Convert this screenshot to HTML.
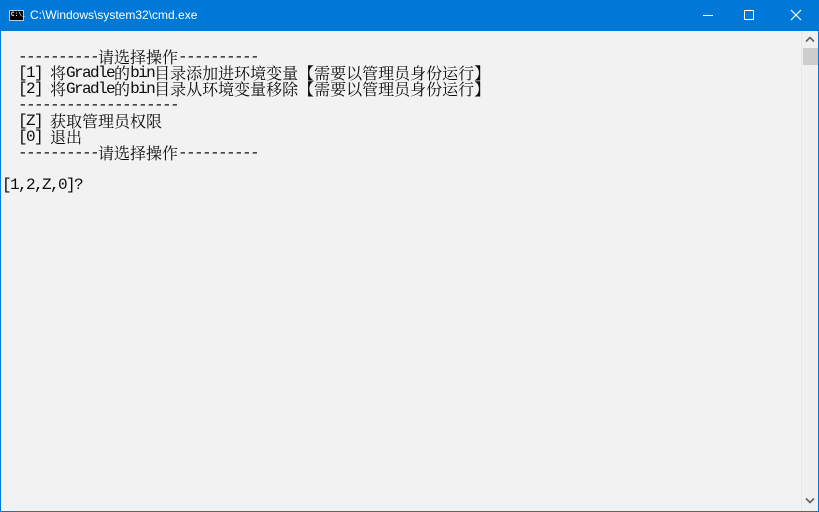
<!DOCTYPE html>
<html><head><meta charset="utf-8"><style>
html,body{margin:0;padding:0;}
body{width:819px;height:512px;overflow:hidden;position:relative;background:#0078d7;font-family:"Liberation Sans",sans-serif;}
.title{position:absolute;left:0;top:0;width:819px;height:31px;background:#0078d7;color:#fff;}
.title .t{position:absolute;left:30px;top:8px;font-size:12px;font-family:"Liberation Sans","Segoe UI",sans-serif;}
.icon{position:absolute;left:9px;top:10px;width:15px;height:11px;background:#000;border:1px solid #c8c8c8;box-sizing:border-box;}
.icon span{position:absolute;left:1px;top:1px;font:bold 6px "Liberation Mono",monospace;color:#fff;line-height:6px;}
.min{position:absolute;left:703px;top:15px;width:10px;height:1px;background:#fff;}
.max{position:absolute;left:744px;top:10px;width:10px;height:10px;border:1px solid #fff;box-sizing:border-box;}
.close{position:absolute;left:789px;top:8px;width:14px;height:14px;}
.client{position:absolute;left:1px;top:31px;width:817px;height:480px;background:#f2f2f2;}
.sb{position:absolute;left:800px;top:0;width:17px;height:480px;background:#f0f0f0;border-left:1px solid #e6e6e6;box-sizing:border-box;}
.thumb{position:absolute;left:1px;top:17px;width:15px;height:17px;background:#cdcdcd;}
.l{position:absolute;left:1px;height:16px;white-space:pre;font-family:"Liberation Mono",monospace;font-size:16px;letter-spacing:-1.6px;line-height:16px;color:#0c0c0c;}
.l span.c{display:inline-block;vertical-align:top;height:16px;font-family:"Noto Serif CJK SC","Noto Sans CJK SC",serif;font-size:16px;letter-spacing:0;line-height:16px;}
.bottom{position:absolute;left:0;top:511px;width:819px;height:1px;background:#0078d7;}
</style></head><body>
<div class="title">
 <div class="icon"><span>C:\_</span></div>
 <div class="t">C:\Windows\system32\cmd.exe</div>
 <div class="min"></div><div class="max"></div>
 <svg class="close" viewBox="0 0 14 14"><path d="M2 2L12 12M12 2L2 12" stroke="#fff" stroke-width="1.2"/></svg>
</div>
<div class="client">
<div class="l" style="top:18px">  ----------<span class="c">请选择操作</span>----------</div>
<div class="l" style="top:34px">  [1] <span class="c">将</span>Gradle<span class="c">的</span>bin<span class="c">目录添加进环境变量【需要以管理员身份运行】</span></div>
<div class="l" style="top:50px">  [2] <span class="c">将</span>Gradle<span class="c">的</span>bin<span class="c">目录从环境变量移除【需要以管理员身份运行】</span></div>
<div class="l" style="top:66px">  --------------------</div>
<div class="l" style="top:82px">  [Z] <span class="c">获取管理员权限</span></div>
<div class="l" style="top:98px">  [0] <span class="c">退出</span></div>
<div class="l" style="top:114px">  ----------<span class="c">请选择操作</span>----------</div>
<div class="l" style="top:146px">[1,2,Z,0]?</div>
<div class="sb">
 <svg style="position:absolute;left:3px;top:5px" width="10" height="7" viewBox="0 0 10 7"><path d="M1 5.5L5 1.5L9 5.5" stroke="#606060" stroke-width="1.6" fill="none"/></svg>
 <div class="thumb"></div>
 <svg style="position:absolute;left:3px;top:466px" width="10" height="7" viewBox="0 0 10 7"><path d="M1 1.5L5 5.5L9 1.5" stroke="#606060" stroke-width="1.6" fill="none"/></svg>
</div>
</div>
<div class="bottom"></div>
</body></html>
